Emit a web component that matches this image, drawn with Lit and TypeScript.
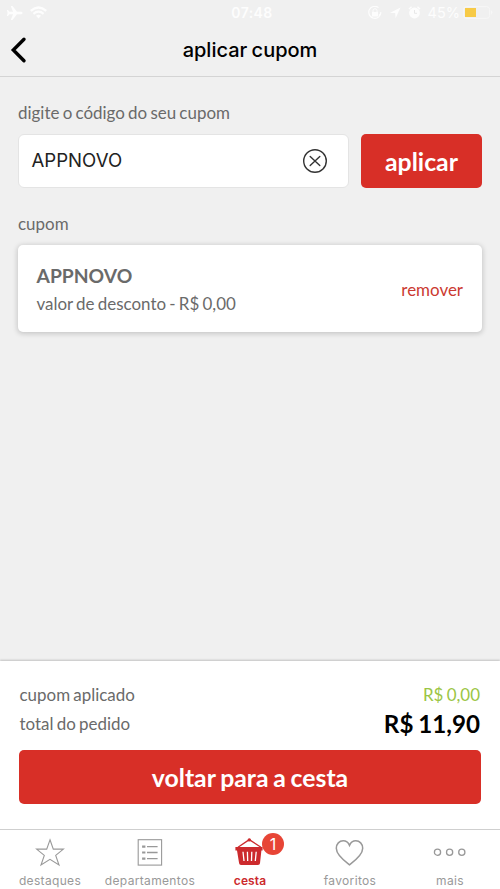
import { LitElement, html, css, svg } from "lit";
import { customElement, property } from "lit/decorators.js";
import { classMap } from "lit/directives/class-map.js";

const icons: Record<string, unknown> = {
  star: svg`<path d="M15 2.8 18.3 12.1H28.4L20.7 18.4 24 28 15 22.3 6 28 9.3 18.4 1.6 12.1H11.7Z"/>`,
  list: svg`<rect x="3.2" y="2.7" width="23.4" height="25.4"/><path d="M12 9.6h10.6M12 15.5h10.6M12 21.6h10.6" stroke-width="1.3"/><path d="M7.1 9.6h3.3M7.1 15.5h3.3M7.1 21.6h3.3" stroke-width="2.2"/>`,
  basket: svg`<path d="M3 10.3 14.3 2.6 26 10.3" stroke-width="1.3"/><circle cx="14.3" cy="2.9" r="1.7" fill="currentColor" stroke="none"/><path d="M.4 10H27.6V13.4H26.4L25 26.3Q24.8 28 23 28H6Q4.3 28 4.1 26.3L2 13.4H.4Z" fill="currentColor" stroke="none"/><path d="M8 14.8 9 24M12.4 14.8 12.7 24M16.8 14.8 16.5 24M21.2 14.8 20.3 24" stroke="#fff" stroke-width="1.3"/>`,
  heart: svg`<path d="M14.5 27.8C10.5 24.8 1.3 18.3 1.3 11.3 1.3 6.8 4.4 3.8 8.2 3.8 11.1 3.8 13.3 5.6 14.5 8.4 15.7 5.6 17.9 3.8 20.8 3.8 24.6 3.8 27.7 6.8 27.7 11.3 27.7 18.3 18.5 24.8 14.5 27.8Z" stroke-width="1.5"/>`,
  dots: svg`<g stroke-width="1.3"><circle cx="2.5" cy="15.2" r="3.1"/><circle cx="14.6" cy="15.2" r="3.1"/><circle cx="26.8" cy="15.2" r="3.1"/></g>`,
};

@customElement("tab-item")
class TabItem extends LitElement {
  @property() label = "";
  @property() icon = "";
  @property() badge = "";
  @property({ type: Boolean }) active = false;
  static styles = css`
    :host { display: block; width: 100px; word-spacing: 0; }
    .tab { display: flex; flex-direction: column; align-items: center; padding-top: 7px; color: #999; position: relative; }
    svg { width: 30px; height: 32px; fill: none; stroke: currentColor; stroke-width: 1.1; overflow: visible; }
    .label { font: 12px/16px Inter, sans-serif; letter-spacing: .34px; margin-top: 4px; white-space: nowrap; }
    .active { color: #cc2a2d; }
    .active .label { font-weight: 600; letter-spacing: .1px; }
    .badge { position: absolute; left: 62px; top: 3px; width: 22px; height: 22px; border-radius: 50%; background: #e74536; color: #fff; font: 16px/22px Inter, sans-serif; text-align: center; }
  `;
  render() {
    return html`<div class=${classMap({ tab: true, active: this.active })}>
      <svg viewBox="0 0 30 32">${icons[this.icon]}</svg>
      <span class="label">${this.label}</span>
      ${this.badge ? html`<span class="badge">${this.badge}</span>` : ""}
    </div>`;
  }
}

@customElement("app-root")
class AppRoot extends LitElement {
  static styles = css`
    * { box-sizing: border-box; }
    :host { display: flex; flex-direction: column; width: 500px; height: 889px; overflow: hidden; background: #f0f0f0; color: #6a6a6a; font: 16.95px/24px Lato, sans-serif; word-spacing: -1.1px; }
    .status { height: 24px; display: grid; grid-template-columns: 1fr auto 1fr; align-items: center; padding: 1px 7px 0 6px; color: #fdfdfd; font: 600 14px/22px Inter, sans-serif; }
    .status svg { display: block; fill: currentColor; }
    .left, .right { display: flex; align-items: center; }
    .left { gap: 7px; }
    .time { letter-spacing: .4px; padding-left: 5px; }
    .right { justify-content: flex-end; font-weight: 400; font-size: 14.5px; }
    .right svg { margin-right: 7px; }
    .right .battery { margin: 0 0 0 3px; }
    .nav { height: 53px; flex: none; display: grid; grid-template-columns: 40px 1fr 40px; align-items: center; border-bottom: 1px solid #d4d4d4; color: #000; }
    .back { width: 18px; height: 28px; margin-left: 10px; display: block; fill: none; stroke: #000; stroke-width: 3.4; stroke-linecap: round; }
    .title { margin: 0; font: 500 20px/28px Inter, sans-serif; word-spacing: -1px; text-align: center; }
    .content { flex: 1; padding: 24px 18px 0; display: flex; flex-direction: column; }
    .form { display: flex; gap: 12px; margin: 9px 0 24px; }
    .field { flex: 1; height: 54px; background: #fff; border: 1px solid #e4e4e4; border-radius: 6px; display: flex; align-items: center; justify-content: space-between; padding: 0 20px 0 12.5px; color: #222; }
    .value { font: 18.6px/24px Inter, sans-serif; padding-bottom: 2px; }
    .clear { width: 26px; height: 26px; fill: none; stroke: #333; stroke-width: 1.4; stroke-linecap: round; }
    .btn { border: 0; padding: 1px 0 0; border-radius: 5px; height: 54px; background: #d82f27; color: #fff; font: 700 24.8px/53px Lato, sans-serif; word-spacing: -1.3px; text-align: center; }
    .apply { width: 121px; }
    .card { margin-top: 9px; height: 87px; background: #fff; border-radius: 5px; box-shadow: 0 1px 5px 1px #0000002b; padding: 1px 19px 0; display: flex; align-items: center; justify-content: space-between; }
    .info { margin-left: -.5px; }
    .code { font-weight: 700; font-size: 19.3px; line-height: 30px; }
    .discount { line-height: 26px; }
    .remove { color: #cb3931; padding-top: 1px; }
    .summary { background: #fff; height: 168px; padding: 20px 19px 0; box-shadow: 0 -1px 2px #0003; }
    .row { display: flex; justify-content: space-between; height: 29px; line-height: 28px; padding: 0 1px 0 .5px; }
    .row.total { height: 40px; line-height: 28px; }
    .green { color: #9bc544; }
    .price { color: #000; font-size: 24.2px; font-weight: 700; }
    .summary .btn { width: 462px; display: block; }
    .tabs { display: flex; height: 60px; flex: none; background: #fff; border-top: 1px solid #cfcfcf; }
  `;
  render() {
    return html`
      <div class="status">
        <div class="left">
          <svg width="17" height="16" viewBox="0 0 17 16"><path d="M16.5 8c0-.8-.8-1.3-2-1.3H11L6.5 1H4.8L7 6.7H3.5L2 4.9H.9L1.6 8 .9 11.1H2l1.5-1.8H7L4.8 15h1.7L11 9.3h3.5c1.2 0 2-.5 2-1.3Z"/></svg>
          <svg width="17" height="13" viewBox="0 0 17 13"><path d="M8.5 12.5 6 9.8q2.5-2 5 0Z"/><g fill="none" stroke="currentColor" stroke-width="2.2"><path d="M3.4 7.8q5.1-4.2 10.2 0"/><path d="M.8 4.8q7.7-6.6 15.4 0"/></g></svg>
        </div>
        <span class="time">07:48</span>
        <div class="right">
          <svg width="14" height="14" viewBox="0 0 14 14"><path d="M10.5 1.6A6 6 0 1 0 12.8 6M10.8 9.5 13 7.3" fill="none" stroke="currentColor" stroke-width="1.2"/><rect x="4" y="6" width="6" height="4.5"/><path d="M5 6V4.7a2 2 0 0 1 4 0V6" fill="none" stroke="currentColor"/></svg>
          <svg width="12" height="12" viewBox="0 0 12 12"><path d="M11.5.5 6.6 11.2 6.2 6H.8Z"/></svg>
          <svg width="13" height="13" viewBox="0 0 13 13"><circle cx="6.5" cy="7" r="5.4"/><path d="M1 3 3.6.8M9.4.8 12 3" stroke="currentColor" stroke-width="1.5"/><path d="M6.5 4v3.3H9" fill="none" stroke="#e8e8e8"/></svg>
          <span>45%</span>
          <svg class="battery" width="30" height="13" viewBox="0 0 30 13"><rect x=".6" y=".6" width="26" height="11.8" rx="3" fill="none" stroke="#f7f7f7"/><rect x="2" y="2" width="11" height="9" fill="#f7ca46"/><path d="M28 4.3q2.6 2.2 0 4.4Z" fill="#f7f7f7"/></svg>
        </div>
      </div>
      <header class="nav">
        <svg class="back" viewBox="0 0 18 28"><path d="M14 3.2 3.3 14 14 24.8"/></svg>
        <h1 class="title">aplicar cupom</h1>
      </header>
      <main class="content">
        <label>digite o código do seu cupom</label>
        <div class="form">
          <div class="field">
            <span class="value">APPNOVO</span>
            <svg class="clear" viewBox="0 0 26 26"><circle cx="13" cy="13" r="11.3"/><path d="M8.2 8.5 17.8 17.5M17.8 8.5 8.2 17.5"/></svg>
          </div>
          <button class="btn apply">aplicar</button>
        </div>
        <label>cupom</label>
        <section class="card">
          <div class="info"><div class="code">APPNOVO</div><div class="discount">valor de desconto - R$ 0,00</div></div>
          <span class="remove">remover</span>
        </section>
      </main>
      <footer class="summary">
        <div class="row"><span>cupom aplicado</span><span class="green">R$ 0,00</span></div>
        <div class="row total"><span>total do pedido</span><span class="price">R$ 11,90</span></div>
        <button class="btn">voltar para a cesta</button>
      </footer>
      <nav class="tabs">
        <tab-item label="destaques" icon="star"></tab-item>
        <tab-item label="departamentos" icon="list"></tab-item>
        <tab-item label="cesta" icon="basket" badge="1" active></tab-item>
        <tab-item label="favoritos" icon="heart"></tab-item>
        <tab-item label="mais" icon="dots"></tab-item>
      </nav>`;
  }
}
